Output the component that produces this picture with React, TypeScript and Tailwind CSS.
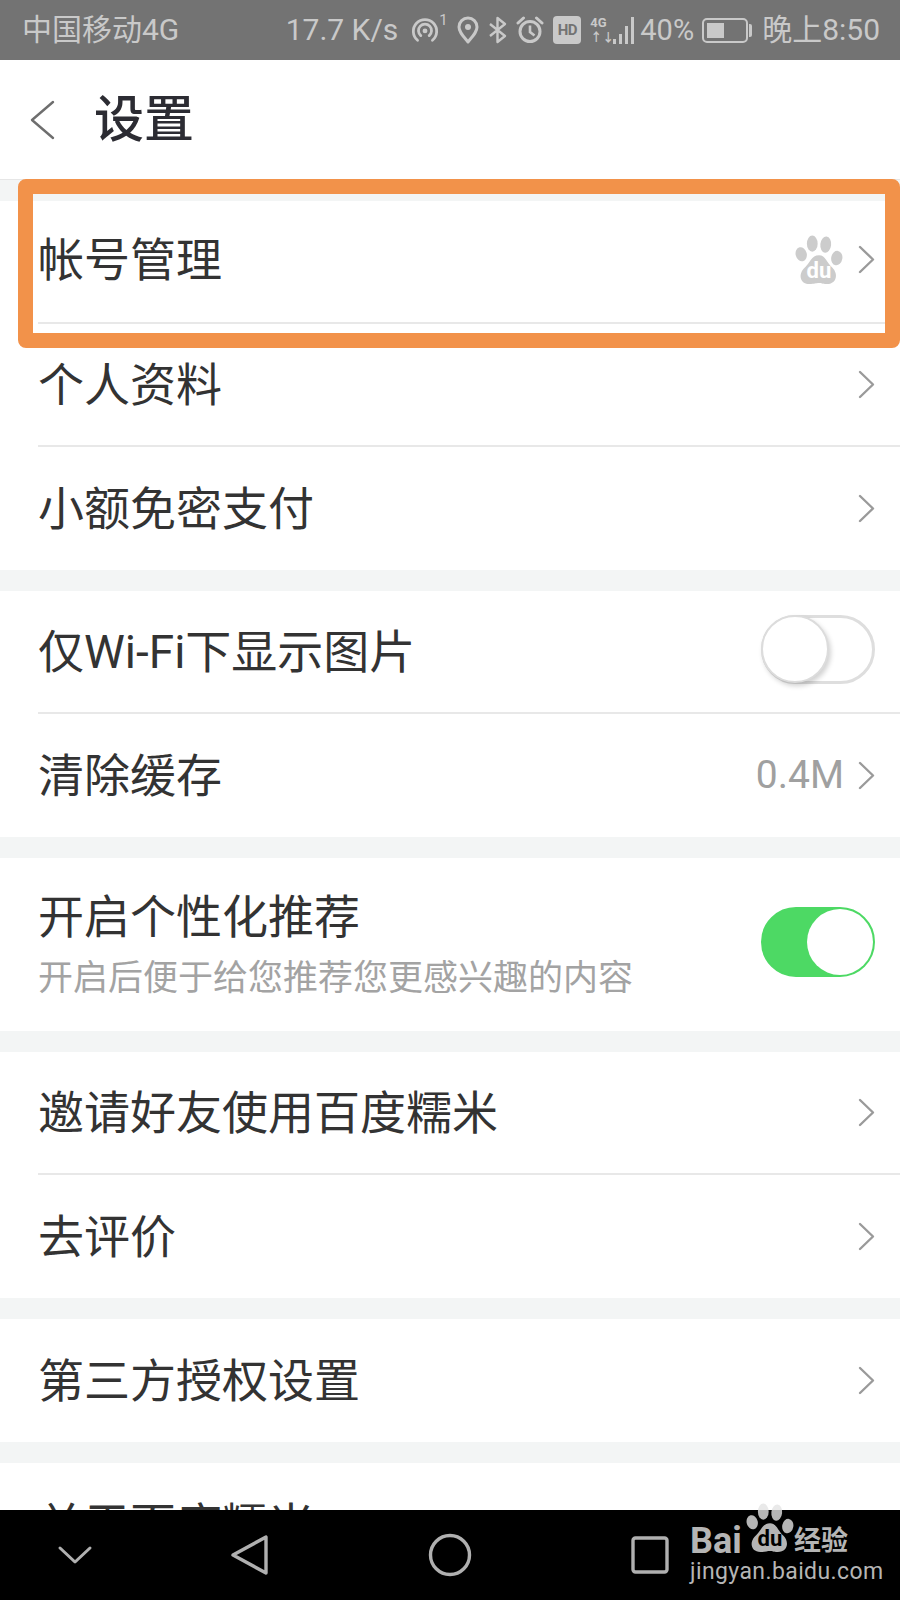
import type { ReactNode } from "react";

const FONT = "font-['Roboto','Noto_Sans_CJK_SC',sans-serif]";

function Chevron() {
  return (
    <svg width="17" height="29" viewBox="0 0 17 29" className="shrink-0">
      <path d="M2 2 L15 14.5 L2 27" fill="none" stroke="#9a9a9a" strokeWidth="2.4" strokeLinecap="round" strokeLinejoin="round" />
    </svg>
  );
}

function Paw({ color, ink, size }: { color: string; ink: string; size: number }) {
  return (
    <svg width={size} height={size} viewBox="0 0 50 52" className="shrink-0">
      <ellipse cx="18" cy="9" rx="5.6" ry="8.4" fill={color} />
      <ellipse cx="32" cy="10" rx="5.6" ry="8.4" fill={color} transform="rotate(6 32 10)" />
      <ellipse cx="6.5" cy="20" rx="5.8" ry="7.4" fill={color} transform="rotate(-14 6.5 20)" />
      <ellipse cx="43.5" cy="24" rx="5.8" ry="7.6" fill={color} transform="rotate(10 43.5 24)" />
      <path d="M25 21 C32 21 33 29 39 34 C45 40 44 51 33 51 C28 51 28 50 25 50 C22 50 20 51 15 51 C6 51 3 42 9 35 C16 29 17 21 25 21 Z" fill={color} />
      <text x="25" y="45" textAnchor="middle" fontFamily="Roboto, sans-serif" fontWeight="700" fontSize="23" fill={ink}>du</text>
    </svg>
  );
}

function Row({ children, right, last, lift }: { children: ReactNode; right?: ReactNode; last?: boolean; lift?: boolean }) {
  return (
    <div className="pl-[38px]">
      <div className={`flex h-[123px] items-center justify-between pr-[25px] ${last ? "" : "border-b-2 border-[#e8e8e8]"} ${lift ? "pb-[4px]" : ""}`}>
        <span className="text-[46px] leading-none text-[#333333]">{children}</span>
        <div className="flex items-center gap-[14px]">
          {right}
          <Chevron />
        </div>
      </div>
    </div>
  );
}

function Toggle({ on }: { on: boolean }) {
  return on ? (
    <div className="mb-[5px] flex h-[70px] w-[114px] justify-end rounded-full border-2 border-[#4dd964] bg-[#4dd964]">
      <div className="h-[66px] w-[66px] rounded-full bg-white" />
    </div>
  ) : (
    <div className="mb-[5px] h-[69px] w-[114px] rounded-full border-[3px] border-[#dedede] bg-white">
      <div className="-ml-[3px] -mt-[3px] h-[68px] w-[68px] rounded-full border-2 border-[#dcdcdc] bg-white shadow-[2px_3px_5px_rgba(0,0,0,0.18)]" />
    </div>
  );
}

function StatusIcons() {
  const c = "#c9c9c9";
  return (
    <>
      {/* hotspot */}
      <div className="flex w-[37px] items-start">
        <svg width="28" height="28" viewBox="0 0 30 28">
          <path d="M7 25 A12.5 12.5 0 1 1 23 25" fill="none" stroke={c} strokeWidth="3" strokeLinecap="round" />
          <path d="M10.5 20 A7 7 0 1 1 19.5 20" fill="none" stroke={c} strokeWidth="3" strokeLinecap="round" />
          <circle cx="15" cy="15" r="2.6" fill={c} />
        </svg>
        <span className="-mt-[3px] text-[15px] leading-none">1</span>
      </div>
      {/* location */}
      <svg width="22" height="28" viewBox="0 0 22 28">
        <path d="M11 26 C6 20 2 16 2 11 A9 9 0 0 1 20 11 C20 16 16 20 11 26 Z" fill="none" stroke={c} strokeWidth="3" strokeLinejoin="round" />
        <circle cx="11" cy="11" r="3" fill={c} />
      </svg>
      {/* bluetooth */}
      <svg width="19" height="28" viewBox="0 0 19 28">
        <path d="M2 8 L17 20 L9.5 26 V2 L17 8 L2 20" fill="none" stroke={c} strokeWidth="2.4" strokeLinejoin="round" />
      </svg>
      {/* alarm */}
      <svg width="28" height="28" viewBox="0 0 28 28">
        <circle cx="14" cy="15.5" r="10" fill="none" stroke={c} strokeWidth="3" />
        <path d="M14 9.5 V16 L18.5 19.5" fill="none" stroke={c} strokeWidth="2.6" />
        <path d="M2 7 L7.5 2 M26 7 L20.5 2" fill="none" stroke={c} strokeWidth="3" strokeLinecap="round" />
      </svg>
      {/* hd */}
      <div className="flex h-[28px] w-[28px] items-center justify-center rounded-[4px] bg-[#c9c9c9] text-[15px] font-bold leading-none tracking-[-0.5px] text-[#737373]">
        HD
      </div>
      {/* 4g signal */}
      <div className="relative h-[28px] w-[44px]">
        <span className="absolute left-0 top-0 text-[13px] font-bold leading-none">4G</span>
        <span className="absolute bottom-0 left-0 text-[12px] font-bold leading-none">↑↓</span>
        <div className="absolute bottom-0 right-0 flex items-end gap-[3px]">
          <div className="h-[5px] w-[3px] bg-[#c9c9c9]" />
          <div className="h-[10px] w-[3px] bg-[#c9c9c9]" />
          <div className="h-[18px] w-[3px] bg-[#c9c9c9]" />
          <div className="h-[27px] w-[3px] bg-[#c9c9c9]" />
        </div>
      </div>
    </>
  );
}

export default function App() {
  return (
    <div className={`relative flex h-[1600px] w-[900px] flex-col overflow-hidden bg-[#f3f5f5] ${FONT}`}>
      {/* Status bar */}
      <div className="flex h-[60px] shrink-0 items-center justify-between bg-[#737373] pl-[22px] pr-[20px] text-[30px] leading-none text-[#c9c9c9]">
        <span>中国移动4G</span>
        <div className="flex items-center gap-[9px]">
          <span className="mr-[4px]">17.7 K/s</span>
          <StatusIcons />
          <span className="-ml-[3px] text-[29px]">40%</span>
          <div className="-ml-[1px] flex items-center gap-[1px]">
            <div className="h-[25px] w-[46px] rounded-[5px] border-2 border-[#c9c9c9] p-[3px]">
              <div className="h-full w-[17px] bg-[#c9c9c9]" />
            </div>
            <div className="h-[13px] w-[3px] rounded-r-[2px] bg-[#c9c9c9]" />
          </div>
          <span className="ml-[1px]">晚上8:50</span>
        </div>
      </div>

      {/* Header */}
      <div className="flex h-[120px] shrink-0 items-center gap-[39px] border-b border-[#e6e6e6] bg-white pl-[30px]">
        <svg width="25" height="40" viewBox="0 0 25 40">
          <path d="M23 2 L2 20 L23 38" fill="none" stroke="#6e6e6e" strokeWidth="2.4" strokeLinecap="round" strokeLinejoin="round" />
        </svg>
        <span className="text-[50px] font-medium leading-none text-[#2c2c33]">设置</span>
      </div>

      {/* List */}
      <div className="flex min-h-0 flex-1 flex-col gap-[21px] overflow-hidden pt-[21px]">
        <div className="shrink-0 bg-white">
          <Row lift right={<Paw color="#cccccc" ink="#ffffff" size={50} />}>帐号管理</Row>
          <Row>个人资料</Row>
          <Row last>小额免密支付</Row>
        </div>

        <div className="shrink-0 bg-white">
          <div className="pl-[38px]">
            <div className="flex h-[123px] items-center justify-between border-b-2 border-[#e8e8e8] pr-[25px]">
              <span className="text-[46px] leading-none text-[#333333]">仅Wi-Fi下显示图片</span>
              <Toggle on={false} />
            </div>
          </div>
          <Row last right={<span className="text-[39px] leading-none text-[#a0a0a0]">0.4M</span>}>清除缓存</Row>
        </div>

        <div className="flex h-[173px] shrink-0 items-center justify-between bg-white pl-[38px] pr-[25px]">
          <div className="flex flex-col gap-[21px]">
            <span className="text-[46px] leading-none text-[#333333]">开启个性化推荐</span>
            <span className="text-[35px] leading-none text-[#a3a3a3]">开启后便于给您推荐您更感兴趣的内容</span>
          </div>
          <Toggle on />
        </div>

        <div className="shrink-0 bg-white">
          <Row>邀请好友使用百度糯米</Row>
          <Row last>去评价</Row>
        </div>

        <div className="shrink-0 bg-white">
          <Row last>第三方授权设置</Row>
        </div>

        <div className="shrink-0 bg-white">
          <Row last>关于百度糯米</Row>
        </div>
      </div>

      {/* Nav bar */}
      <div className="relative flex h-[90px] shrink-0 items-center bg-black">
        <svg width="900" height="90" viewBox="0 0 900 90" className="shrink-0">
          <path d="M60 38 L75 52 L90 38" fill="none" stroke="#b0b0b0" strokeWidth="3" strokeLinecap="round" strokeLinejoin="round" />
          <path d="M266 27 V63 L233 45 Z" fill="none" stroke="#b0b0b0" strokeWidth="3.4" strokeLinejoin="round" />
          <circle cx="450" cy="45" r="19.5" fill="none" stroke="#b0b0b0" strokeWidth="3.4" />
          <rect x="633" y="28" width="34" height="34" rx="2.5" fill="none" stroke="#b0b0b0" strokeWidth="3.4" />
        </svg>

        {/* Watermark */}
        <span className="absolute left-[690px] top-[13px] text-[36px] font-bold leading-none text-[#b5b5b5]">Bai</span>
        <div className="absolute -top-[7px] left-[745px]">
          <Paw color="#b5b5b5" ink="#000000" size={50} />
        </div>
        <div className="absolute -top-[7px] left-[745px] h-[7px] w-[50px] bg-white/70" />
        <span className="absolute left-[794px] top-[18px] text-[27px] font-bold leading-none text-[#b5b5b5]">经验</span>
        <span className="absolute left-[690px] top-[50px] text-[23px] leading-none tracking-[0.4px] text-[#b5b5b5]">jingyan.baidu.com</span>
      </div>

      {/* Highlight */}
      <div className="pointer-events-none absolute left-[18px] top-[179px] h-[169px] w-[882px] rounded-[8px] border-[15px] border-[#f2924a]" />
    </div>
  );
}
